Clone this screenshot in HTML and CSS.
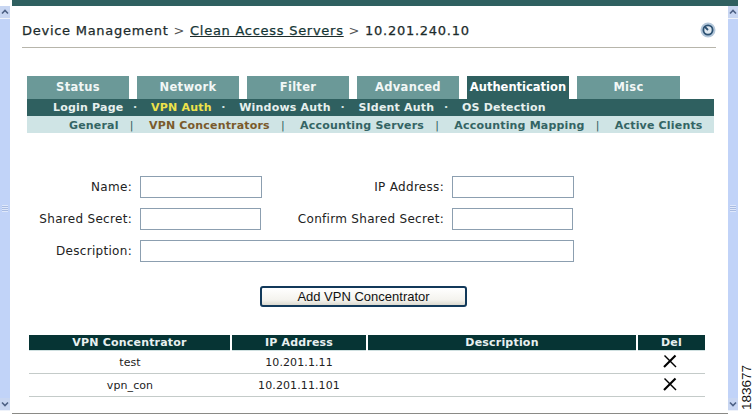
FILE: index.html
```html
<!DOCTYPE html>
<html lang="en">
<head>
  <meta charset="UTF-8" />
  <title>Clean Access Servers</title>
  <link rel="stylesheet" href="styles.css">
</head>
<body>

  <div class="topbar"></div>

  <div class="scrollbar">
    <div class="arrow"><svg width="10" height="10" viewBox="0 0 10 10"><path d="M2 6.5 5 3.5 8 6.5" fill="none" stroke="#4d6185" stroke-width="1.6"/></svg></div>
    <div class="track"><div class="grip"></div></div>
    <div class="arrow"><svg width="10" height="10" viewBox="0 0 10 10"><path d="M2 3.5 5 6.5 8 3.5" fill="none" stroke="#4d6185" stroke-width="1.6"/></svg></div>
  </div>

  <main class="page">
    <header class="crumbs">
      <h1>Device Management <span class="sep">&gt;</span> <a href="#">Clean Access Servers</a> <span class="sep">&gt;</span> 10.201.240.10</h1>
      <svg class="help" width="16" height="16" viewBox="0 0 16 16">
        <circle cx="8" cy="8" r="7.5" fill="#b4c7da"/>
        <circle cx="8" cy="8" r="4.6" fill="#dfe8f0" stroke="#2c5172" stroke-width="1.8"/>
        <path d="M5 5 8 8" stroke="#2c5172" stroke-width="1.8"/>
      </svg>
    </header>

    <nav class="tabs">
      <a href="#">Status</a>
      <a href="#">Network</a>
      <a href="#">Filter</a>
      <a href="#">Advanced</a>
      <a href="#" class="active">Authentication</a>
      <a href="#">Misc</a>
    </nav>
    <nav class="subnav">
      <a href="#">Login Page</a><i>·</i>
      <a href="#" class="current">VPN Auth</a><i>·</i>
      <a href="#">Windows Auth</a><i>·</i>
      <a href="#">SIdent Auth</a><i>·</i>
      <a href="#">OS Detection</a>
    </nav>
    <nav class="subsub">
      <a href="#">General</a><i>|</i>
      <a href="#" class="current">VPN Concentrators</a><i>|</i>
      <a href="#">Accounting Servers</a><i>|</i>
      <a href="#">Accounting Mapping</a><i>|</i>
      <a href="#">Active Clients</a>
    </nav>

    <form class="form">
      <label>Name:</label>
      <input type="text" class="f-wide">
      <label>IP Address:</label>
      <input type="text" class="f-wide">
      <label>Shared Secret:</label>
      <input type="text" class="f-narrow">
      <label>Confirm Shared Secret:</label>
      <input type="text" class="f-narrow">
      <label>Description:</label>
      <input type="text" class="f-full">
    </form>

    <div class="actions">
      <button type="button">Add VPN Concentrator</button>
    </div>

    <table class="list">
      <colgroup>
        <col class="c1"><col class="c2"><col class="c3"><col class="c4">
      </colgroup>
      <thead>
        <tr><th>VPN Concentrator</th><th>IP Address</th><th>Description</th><th>Del</th></tr>
      </thead>
      <tbody>
        <tr>
          <td>test</td><td>10.201.1.11</td><td></td>
          <td><svg width="14" height="14" viewBox="0 0 14 14"><path d="M1.5 1.5 13 13" stroke="#000" stroke-width="1.4"/><path d="M12.5 1.5 1 13" stroke="#000" stroke-width="2.1"/></svg></td>
        </tr>
        <tr>
          <td>vpn_con</td><td>10.201.11.101</td><td></td>
          <td><svg width="14" height="14" viewBox="0 0 14 14"><path d="M1.5 1.5 13 13" stroke="#000" stroke-width="1.4"/><path d="M12.5 1.5 1 13" stroke="#000" stroke-width="2.1"/></svg></td>
        </tr>
      </tbody>
    </table>
  </main>

  <div class="scrollbar">
    <div class="arrow"><svg width="10" height="10" viewBox="0 0 10 10"><path d="M2 6.5 5 3.5 8 6.5" fill="none" stroke="#4d6185" stroke-width="1.6"/></svg></div>
    <div class="track"><div class="grip"></div></div>
    <div class="arrow"><svg width="10" height="10" viewBox="0 0 10 10"><path d="M2 3.5 5 6.5 8 3.5" fill="none" stroke="#4d6185" stroke-width="1.6"/></svg></div>
  </div>

  <aside class="figure"><span>183677</span></aside>

</body>
</html>
```

FILE: styles.css
```css
html, body {
  margin: 0;
  height: 414px;
  overflow: hidden;
}

body {
  display: grid;
  grid-template-columns: 12px 716px 10px 15px;
  grid-template-rows: 6px 408px;
  background: #fff;
  font-family: "DejaVu Sans", Verdana, sans-serif;
  color: #1c2b2b;
}

.topbar {
  grid-column: 2 / 4;
  grid-row: 1;
  background: #2f6060;
}

/* window scrollbars */
.scrollbar {
  grid-row: 2;
  width: 10px;
  height: 405px;
  display: flex;
  flex-direction: column;
  background: #c1d3f8;
}

.arrow {
  height: 12px;
  background: #c8d6f2;
  border-bottom: 1px solid #eef2fa;
  display: flex;
  justify-content: center;
  align-items: center;
}

.arrow svg {
  flex: none;
}

.track {
  flex: 1;
  display: flex;
  align-items: center;
  justify-content: center;
}

.grip {
  width: 6px;
  height: 7px;
  background: repeating-linear-gradient(#dfe8fb 0 1px, #a9bce2 1px 2px);
}

.page {
  grid-row: 2;
  box-sizing: border-box;
  height: 408px;
  border-bottom: 1px solid #8a8a86;
}

.crumbs {
  margin: 0 12px 0 10px;
  height: 41px;
  border-bottom: 1px solid #b7b5ab;
  display: flex;
  justify-content: space-between;
  align-items: flex-start;
}

.crumbs h1 {
  margin: 16px 0 0;
  font-size: 13px;
  line-height: 17px;
  font-weight: normal;
  letter-spacing: 0.73px;
  -webkit-text-stroke: 0.25px #1c2b2b;
  color: #1c2b2b;
  white-space: nowrap;
}

.crumbs a {
  color: #123c3c;
  text-decoration: underline;
}

.sep {
  color: #555;
  -webkit-text-stroke: 0;
}

.help {
  margin: 16px 0 0;
}

.tabs {
  display: flex;
  gap: 8px;
  margin: 28px 0 0 15px;
}

.tabs a {
  width: 102px;
  height: 23px;
  line-height: 23px;
  text-align: center;
  background: #6b9998;
  color: #f2f7f6;
  font-size: 11.5px;
  font-weight: bold;
  letter-spacing: 0.3px;
  text-decoration: none;
}

.tabs a.active {
  background: #2f6060;
  color: #fff;
  letter-spacing: 0;
}

.tabs a:last-child {
  width: 103px;
}

.subnav, .subsub {
  margin-left: 15px;
  width: 687px;
  height: 17px;
  line-height: 17px;
  font-size: 11px;
  font-weight: bold;
  white-space: nowrap;
  box-sizing: border-box;
}

.subnav {
  background: #2f6060;
  padding-left: 26px;
  letter-spacing: 0.2px;
  color: #d4e4e2;
}

.subnav a {
  color: #e6f0ee;
  text-decoration: none;
}

.subnav a.current {
  color: #eee24a;
}

.subnav i {
  font-style: normal;
  margin: 0 9.6px;
}

.subsub {
  background: #cfe4e5;
  padding-top: 1px;
  padding-left: 42px;
  letter-spacing: 0.18px;
  color: #2f6060;
}

.subsub a {
  color: #346464;
  text-decoration: none;
}

.subsub a.current {
  color: #7a5a2c;
}

.subsub i {
  font-style: normal;
  font-weight: normal;
  margin: 0 11.2px;
}

/* add form */
.form {
  margin: 43px 0 0 19px;
  display: grid;
  grid-template-columns: 109px 122px 190px 122px;
  grid-auto-rows: 22px;
  row-gap: 10px;
  font-size: 12px;
  color: #222;
}

.form label {
  text-align: right;
  line-height: 22px;
  padding-right: 8px;
  letter-spacing: 0.3px;
}

.form input {
  box-sizing: border-box;
  margin: 0;
  height: 22px;
  background: #fff;
  border: 1px solid #8c9fb0;
  border-radius: 0;
  padding: 0 2px;
}

.f-wide {
  width: 122px;
}

.f-narrow {
  width: 121px;
}

.f-full {
  grid-column: 2 / 5;
  width: 434px;
}

.actions {
  margin: 24px 0 0 248px;
}

.actions button {
  width: 207px;
  height: 21px;
  padding: 0;
  font-family: "Liberation Sans", Arial, sans-serif;
  font-size: 13px;
  color: #111;
  background: linear-gradient(#fff, #f4f3ee 70%, #dcdad0);
  border: 2px solid #12395a;
  border-radius: 3px;
}

/* concentrators table */
.list {
  margin: 28px 0 0 17px;
  width: 676px;
  table-layout: fixed;
  border-collapse: collapse;
  font-size: 11px;
  letter-spacing: 0.1px;
}

.c1 { width: 202px; }
.c2 { width: 136px; }
.c3 { width: 270px; }
.c4 { width: 68px; }

.list th {
  height: 15px;
  padding: 0;
  background: #063434;
  color: #e8f0f0;
  font-weight: bold;
  letter-spacing: 0.2px;
  line-height: 15px;
  border-left: 2px solid #fff;
  border-bottom: 1px solid #cfe0e0;
}

.list th:first-child {
  border-left: 0;
}

.list td {
  height: 22px;
  padding: 0;
  text-align: center;
  color: #222;
  border-bottom: 1px solid #c4cbc9;
}

.list td svg {
  display: block;
  margin: -3px auto 0;
  position: relative;
  left: -1px;
}

.figure {
  grid-row: 2;
  position: relative;
}

.figure span {
  position: absolute;
  left: 3px;
  bottom: 4px;
  writing-mode: vertical-rl;
  transform: rotate(180deg);
  font-family: "Liberation Sans", Arial, sans-serif;
  font-size: 13.5px;
  line-height: 11px;
  color: #111;
}
```
